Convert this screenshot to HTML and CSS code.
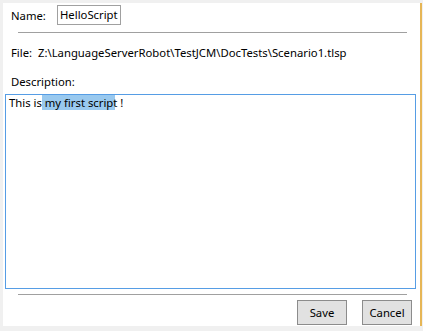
FILE: index.html
```html
<!DOCTYPE html>
<html>
<head>
<meta charset="utf-8">
<link rel="stylesheet" href="styles.css">
</head>
<body>
<div class="window">
  <div class="name-row">
    <span class="label">Name:</span>
    <span class="name-box">HelloScript</span>
  </div>
  <div class="sep sep-top"></div>
  <div class="file-row">File:&nbsp; Z:\LanguageServerRobot\TestJCM\DocTests\Scenario1.tlsp</div>
  <div class="desc-label">Description:</div>
  <div class="desc-box">This is<span class="sel"> my first scrip</span><span class="half">t</span> !</div>
  <div class="sep sep-bottom"></div>
  <div class="buttons">
    <button class="btn">Save</button>
    <button class="btn">Cancel</button>
  </div>
</div>
</body>
</html>
```
FILE: styles.css
```css
html, body {
  margin: 0;
  padding: 0;
  background: #f0f0f0;
}
body {
  width: 423px;
  height: 331px;
  overflow: hidden;
  font-family: "Noto Sans", "Open Sans", sans-serif;
  font-size: 11.3px;
  color: #000;
}
.window {
  margin: 3px 0 0 3px;
  width: 417px;
  height: 323px;
  background: #fff;
  border-right: 2px solid #e6b656;
  display: flex;
  flex-direction: column;
  box-sizing: content-box;
}
.window > * {
  flex-shrink: 0;
}
.name-row {
  display: flex;
  align-items: center;
  height: 20px;
  margin-top: 2px;
  padding-left: 8px;
}
.label {
  width: 46px;
}
.name-box {
  box-sizing: border-box;
  height: 20px;
  width: 64px;
  border: 1px solid #a0a0a0;
  padding: 0 2px;
  line-height: 18px;
  white-space: nowrap;
}
.sep {
  height: 1px;
  background: #a0a0a0;
  margin-left: 15px;
  width: 389px;
}
.sep-top {
  margin-top: 7px;
}
.file-row {
  margin-top: 12px;
  padding-left: 8px;
  line-height: 16px;
  white-space: nowrap;
}
.desc-label {
  margin-top: 13px;
  padding-left: 8px;
  line-height: 16px;
}
.desc-box {
  margin-top: 4px;
  margin-left: 2px;
  box-sizing: border-box;
  width: 411px;
  height: 195px;
  border: 1px solid #569de5;
  padding: 0 3px;
  line-height: 16px;
}
.sel {
  background: #99c9ef;
}
.half {
  background: linear-gradient(to right, #99c9ef 50%, transparent 50%);
}
.sep-bottom {
  margin-top: 5px;
}
.buttons {
  display: flex;
  justify-content: flex-end;
  gap: 15px;
  margin-top: 5px;
  padding-right: 8px;
}
.btn {
  box-sizing: border-box;
  width: 50px;
  height: 25px;
  background: #e1e1e1;
  border: 1px solid #8c8c8c;
  font-family: "Noto Sans", "Open Sans", sans-serif;
  font-size: 11.3px;
  color: #000;
  padding: 0;
  margin: 0;
}
```
